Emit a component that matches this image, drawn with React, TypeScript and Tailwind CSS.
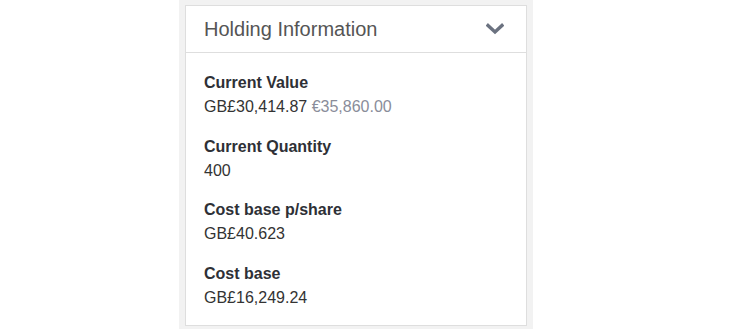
import React from "react";

const items = [
  { label: "Current Value", value: "GB£30,414.87", extra: "€35,860.00" },
  { label: "Current Quantity", value: "400" },
  { label: "Cost base p/share", value: "GB£40.623" },
  { label: "Cost base", value: "GB£16,249.24" },
];

export default function App() {
  return (
    <div className="w-[732px] h-[332px] bg-white" style={{ fontFamily: '"Liberation Sans", Arial, sans-serif' }}>
      <div className="ml-[179px] w-[354px] bg-[#f2f2f2] px-[6px] pt-[5px] pb-[3px]">
        <div className="bg-white border border-[#dedede]">
          <div className="h-[47px] flex items-center justify-between pl-[18px] pr-[22px] border-b border-[#dedede]">
            <span className="text-[20px] text-[#555] leading-none">Holding Information</span>
            <svg width="18" height="12" viewBox="0 0 18 12" fill="none">
              <path d="M2 2.5 L9 9 L16 2.5" stroke="#6b7280" strokeWidth="3.4" strokeLinecap="square" />
            </svg>
          </div>
          <div className="pl-[18px] pt-[18px] pb-[15px] flex flex-col gap-[15.5px]">
            {items.map((it) => (
              <div key={it.label} className="text-[16px] leading-[24px]">
                <div className="font-bold text-[#2e3036]">{it.label}</div>
                <div className="text-[#333]">
                  {it.value}
                  {it.extra && <span className="text-[#8a8d9a]"> {it.extra}</span>}
                </div>
              </div>
            ))}
          </div>
        </div>
      </div>
    </div>
  );
}
